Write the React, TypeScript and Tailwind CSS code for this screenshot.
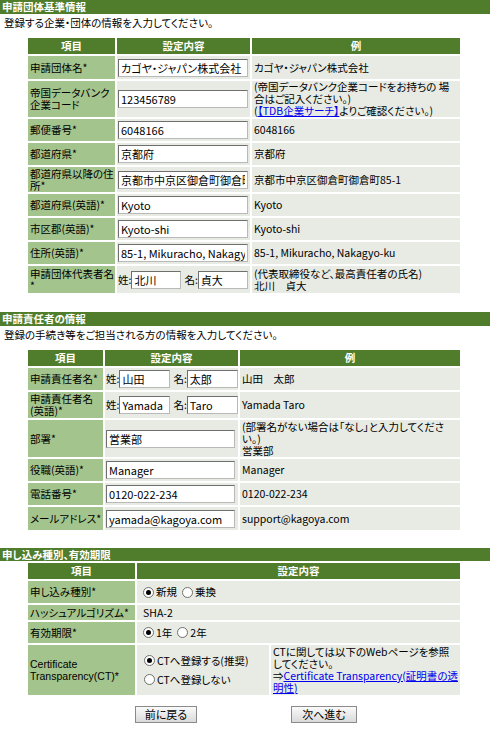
import React from "react";

const font = "font-['Noto_Sans_CJK_JP','Noto_Sans',sans-serif] [font-feature-settings:'palt']";

function Bar({ title, h = "h-[14px] leading-[14px]" }: { title: string; h?: string }) {
  return <div className={`${h} bg-[#4f7d2b] text-white font-bold text-[10.5px] pl-[2px]`}>{title}</div>;
}

function Field({ value, w = "w-[130px]" }: { value: string; w?: string }) {
  return (
    <input
      readOnly
      value={value}
      className={`${w} h-[18px] bg-white border border-t-[#6f6f6f] border-l-[#6f6f6f] border-r-[#b9b9b9] border-b-[#b9b9b9] px-[2px] text-[11px] leading-[16px] text-black outline-none ${font}`}
    />
  );
}

function Names({ sei, mei, w }: { sei: string; mei: string; w: string }) {
  return (
    <div className="flex items-center">
      <span>姓:</span>
      <Field value={sei} w={w} />
      <span className="ml-[3px]">名:</span>
      <Field value={mei} w={w} />
    </div>
  );
}

function Radio({ on, label }: { on?: boolean; label: string }) {
  return (
    <span className="inline-flex items-center gap-[2px]">
      <span className="w-[11px] h-[11px] rounded-full border border-[#6f6f6f] bg-white flex items-center justify-center">
        {on && <span className="w-[5px] h-[5px] rounded-full bg-black" />}
      </span>
      <span>{label}</span>
    </span>
  );
}

type Row = { h: string; label: React.ReactNode; value: React.ReactNode; ex?: React.ReactNode };

function Table({ cols, rows, head, spanHead }: { cols: string[]; rows: Row[]; head: string[]; spanHead?: boolean }) {
  return (
    <table className="ml-[26px] w-[436px] table-fixed border-separate border-spacing-[2px] text-[10.5px] leading-[12px]">
      <colgroup>
        {cols.map((c) => <col key={c} className={c} />)}
      </colgroup>
      <thead>
        <tr className="h-[16px]">
          <th className="bg-[#4f7d2b] text-white font-bold p-0 text-center leading-[14px]">{head[0]}</th>
          {spanHead ? (
            <th colSpan={2} className="bg-[#4f7d2b] text-white font-bold p-0 text-center leading-[14px]">{head[1]}</th>
          ) : (
            <>
              <th className="bg-[#4f7d2b] text-white font-bold p-0 text-center leading-[14px]">{head[1]}</th>
              <th className="bg-[#4f7d2b] text-white font-bold p-0 text-center leading-[14px]">{head[2]}</th>
            </>
          )}
        </tr>
      </thead>
      <tbody>
        {rows.map((r, i) => (
          <tr key={i} className={r.h}>
            <td className="bg-[#a4c48d] pl-[2px] pr-0 py-0 align-middle whitespace-nowrap overflow-hidden">{r.label}</td>
            <td colSpan={r.ex === undefined ? 2 : 1} className="bg-[#e7ebe4] pl-[1px] pr-[2px] py-0 align-middle">{r.value}</td>
            {r.ex !== undefined && <td className="bg-[#e7ebe4] px-[2px] py-0 align-middle">{r.ex}</td>}
          </tr>
        ))}
      </tbody>
    </table>
  );
}

export default function App() {
  const link = "text-[#0000ee] underline";
  const rows1: Row[] = [
    { h: "h-[23px]", label: "申請団体名*", value: <Field value="カゴヤ・ジャパン株式会社" />, ex: "カゴヤ・ジャパン株式会社" },
    {
      h: "h-[36px]",
      label: <>帝国データバンク<br />企業コード</>,
      value: <Field value="123456789" />,
      ex: (
        <>
          (帝国データバンク企業コードをお持ちの 場合はご記入ください。)<br />
          (<span className={link}>【TDB企業サーチ】</span>よりご確認ください。)
        </>
      ),
    },
    { h: "h-[22px]", label: "郵便番号*", value: <Field value="6048166" />, ex: "6048166" },
    { h: "h-[22px]", label: "都道府県*", value: <Field value="京都府" />, ex: "京都府" },
    { h: "h-[25px]", label: <>都道府県以降の住<br />所*</>, value: <Field value="京都市中京区御倉町御倉町85-1" />, ex: "京都市中京区御倉町御倉町85-1" },
    { h: "h-[22px]", label: "都道府県(英語)*", value: <Field value="Kyoto" />, ex: "Kyoto" },
    { h: "h-[22px]", label: "市区郡(英語)*", value: <Field value="Kyoto-shi" />, ex: "Kyoto-shi" },
    { h: "h-[22px]", label: "住所(英語)*", value: <Field value="85-1, Mikuracho, Nakagyo-ku" />, ex: "85-1, Mikuracho, Nakagyo-ku" },
    {
      h: "h-[27px]",
      label: <>申請団体代表者名<br />*</>,
      value: <Names sei="北川" mei="貞大" w="w-[50px]" />,
      ex: <>(代表取締役など、最高責任者の氏名)<br />北川　貞大</>,
    },
  ];
  const rows2: Row[] = [
    { h: "h-[22px]", label: "申請責任者名*", value: <Names sei="山田" mei="太郎" w="w-[51px]" />, ex: "山田　太郎" },
    { h: "h-[26px]", label: <>申請責任者名<br />(英語)*</>, value: <Names sei="Yamada" mei="Taro" w="w-[51px]" />, ex: "Yamada Taro" },
    {
      h: "h-[37px]",
      label: "部署*",
      value: <Field value="営業部" w="w-[129px]" />,
      ex: <>(部署名がない場合は「なし」と入力してください。)<br />営業部</>,
    },
    { h: "h-[22px]", label: "役職(英語)*", value: <Field value="Manager" w="w-[129px]" />, ex: "Manager" },
    { h: "h-[22px]", label: "電話番号*", value: <Field value="0120-022-234" w="w-[129px]" />, ex: "0120-022-234" },
    { h: "h-[23px]", label: "メールアドレス*", value: <Field value="yamada@kagoya.com" w="w-[129px]" />, ex: "support@kagoya.com" },
  ];
  const rows3: Row[] = [
    { h: "h-[22px]", label: "申し込み種別*", value: <div className="flex gap-[5px] pl-[5px]"><Radio on label="新規" /><Radio label="乗換" /></div> },
    { h: "h-[15px]", label: "ハッシュアルゴリズム*", value: <span className="pl-[5px]">SHA-2</span> },
    { h: "h-[21px]", label: "有効期限*", value: <div className="flex gap-[5px] pl-[5px]"><Radio on label="1年" /><Radio label="2年" /></div> },
    {
      h: "h-[50px]",
      label: <span className="font-['Liberation_Sans',sans-serif]">Certificate<br />Transparency(CT)*</span>,
      value: (
        <div className="flex flex-col gap-[7px] pl-[6px]">
          <Radio on label="CTへ登録する(推奨)" />
          <Radio label="CTへ登録しない" />
        </div>
      ),
      ex: (
        <>
          CTに関しては以下のWebページを参照してください。<br />
          ⇒<span className={link}>Certificate Transparency(証明書の透明性)</span>
        </>
      ),
    },
  ];

  return (
    <div className={`w-[490px] h-[750px] bg-white text-black text-[10.5px] ${font}`}>
      <Bar title="申請団体基準情報" />
      <div className="h-[22px] pt-[2px] pl-[4px] leading-[14px]">登録する企業・団体の情報を入力してください。</div>
      <Table cols={["w-[87px]", "w-[133px]", "w-[208px]"]} head={["項目", "設定内容", "例"]} rows={rows1} />

      <div className="mt-[17px]"><Bar title="申請責任者の情報" /></div>
      <div className="h-[22px] pt-[2px] pl-[4px] leading-[14px]">登録の手続き等をご担当される方の情報を入力してください。</div>
      <Table cols={["w-[75px]", "w-[133px]", "w-[220px]"]} head={["項目", "設定内容", "例"]} rows={rows2} />

      <div className="mt-[16px]"><Bar title="申し込み種別、有効期限" h="h-[13px] leading-[13px]" /></div>
      <Table cols={["w-[107px]", "w-[132px]", "w-[189px]"]} head={["項目", "設定内容"]} spanHead rows={rows3} />

      <div className="mt-[9px] flex pl-[135px] gap-[94px]">
        <button className="w-[62px] h-[17px] border border-[#8a8a8a] bg-gradient-to-b from-[#fafafa] to-[#dadada] text-[11px] leading-[15px]">前に戻る</button>
        <button className="w-[66px] h-[17px] border border-[#8a8a8a] bg-gradient-to-b from-[#fafafa] to-[#dadada] text-[11px] leading-[15px]">次へ進む</button>
      </div>
    </div>
  );
}
